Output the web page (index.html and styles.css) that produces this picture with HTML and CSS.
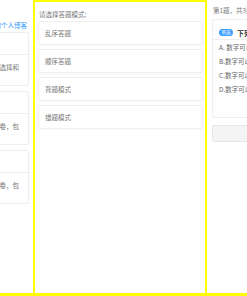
FILE: index.html
```html
<!DOCTYPE html>
<html lang="zh-CN">
<head>
  <meta charset="UTF-8" />
  <meta name="viewport" content="width=device-width, initial-scale=1.0">
  <title>在线答题</title>
  <link rel="stylesheet" href="styles.css">
</head>
<body>

  <div class="viewport">
    <div class="track">

      <section class="slide slide-blog">
        <p class="blog-link">欢迎访问 Demo的个人博客</p>
        <div class="blog-card">
          <div class="blog-head">Java 基础题库</div>
          <div class="blog-body">收录了常见的基础知识点，含单选、多选择和</div>
        </div>
        <div class="blog-card">
          <div class="blog-head">前端开发题库</div>
          <div class="blog-body">精选前端开发面试题，可在线模拟试卷，包</div>
        </div>
        <div class="blog-card">
          <div class="blog-head">数据结构题库</div>
          <div class="blog-body">精选数据结构面试题，可在线模拟试卷，包</div>
        </div>
      </section>

      <section class="slide slide-mode">
        <p class="mode-title">请选择答题模式:</p>
        <div class="mode-card">乱序答题</div>
        <div class="mode-card">顺序答题</div>
        <div class="mode-card">背题模式</div>
        <div class="mode-card">错题模式</div>
      </section>

      <section class="slide slide-quiz">
        <p class="quiz-progress">第1题，共3题</p>
        <div class="quiz-card">
          <div class="quiz-head">
            <span class="tag">单选</span>
            <span class="quiz-question">下列关于数字的说法正确的是</span>
          </div>
          <ul class="options">
            <li>A. 数字可以比较大小</li>
            <li>B.数字可以进行运算</li>
            <li>C.数字可以转换为字符串</li>
            <li>D.数字可以作为对象属性</li>
          </ul>
        </div>
        <div class="quiz-btn">下一题</div>
      </section>

    </div>
  </div>

</body>
</html>
```

FILE: styles.css
```css
* { box-sizing: border-box; }
body {
  margin: 0;
  background: #fff;
  font-family: "Noto Sans CJK SC", "Noto Sans", sans-serif;
  font-size: 6.5px;
  color: #666;
}
p { margin: 0; }
ul { margin: 0; padding: 0; list-style: none; }

.viewport {
  width: 247px;
  height: 296px;
  overflow: hidden;
  border-bottom: 3px solid #ffff00;
}
.track {
  display: flex;
  height: 293px;
  transform: translateX(-141px);
}
.slide {
  flex: 0 0 174px;
  min-width: 0;
  overflow: hidden;
  height: 293px;
  padding: 0 4px 0 5px;
  background: #fff;
}

/* lista de blogs (slide anterior) */
.blog-link {
  padding: 21px 2px 0 0;
  line-height: 8px;
  text-align: right;
  color: #409eff;
  margin-bottom: 3px;
}
.blog-card {
  border: 1px solid #eee;
  border-radius: 2px;
  margin-bottom: 5px;
}
.blog-head {
  height: 22px;
  line-height: 21px;
  padding: 0 8px;
  border-bottom: 1px solid #eee;
  color: #333;
}
.blog-body {
  padding: 8px 9px 14px;
  line-height: 8px;
  white-space: nowrap;
  text-align: right;
  color: #777;
}

/* modo de resposta (slide ativo) */
.slide-mode {
  border: 2px solid #ffff00;
  border-bottom: none;
  padding: 0 2px 0 3px;
}
.mode-title {
  padding: 8px 0 0 1px;
  line-height: 8px;
  margin-bottom: 3px;
  color: #777;
}
.mode-card {
  height: 24px;
  line-height: 22px;
  padding-left: 6px;
  margin-bottom: 4px;
  border: 1px solid #efefef;
  border-radius: 2px;
  box-shadow: 0 1px 2px rgba(0,0,0,0.03);
  color: #777;
}

/* questão (próximo slide) */
.quiz-progress {
  padding: 6px 0 0 1px;
  line-height: 8px;
  margin-bottom: 5px;
  color: #777;
  white-space: nowrap;
}
.quiz-card {
  border: 1px solid #eee;
  border-radius: 2px;
  padding-bottom: 21px;
}
.quiz-head {
  display: flex;
  align-items: center;
  gap: 4px;
  height: 20px;
  padding: 6px 6px 0;
  border-bottom: 1px solid #eee;
}
.tag {
  background: #409eff;
  color: #fff;
  border-radius: 4px;
  font-size: 4.5px;
  line-height: 7px;
  height: 7px;
  padding: 0 2.5px;
}
.quiz-question {
  font-size: 7px;
  font-weight: bold;
  color: #333;
  white-space: nowrap;
}
.options li {
  line-height: 14px;
  padding-left: 6px;
  color: #666;
  white-space: nowrap;
}
.quiz-btn {
  margin-top: 7px;
  height: 17px;
  line-height: 15px;
  text-align: center;
  background: #f4f4f5;
  border: 1px solid #e6e6e6;
  border-radius: 2px;
  color: #999;
}
```
